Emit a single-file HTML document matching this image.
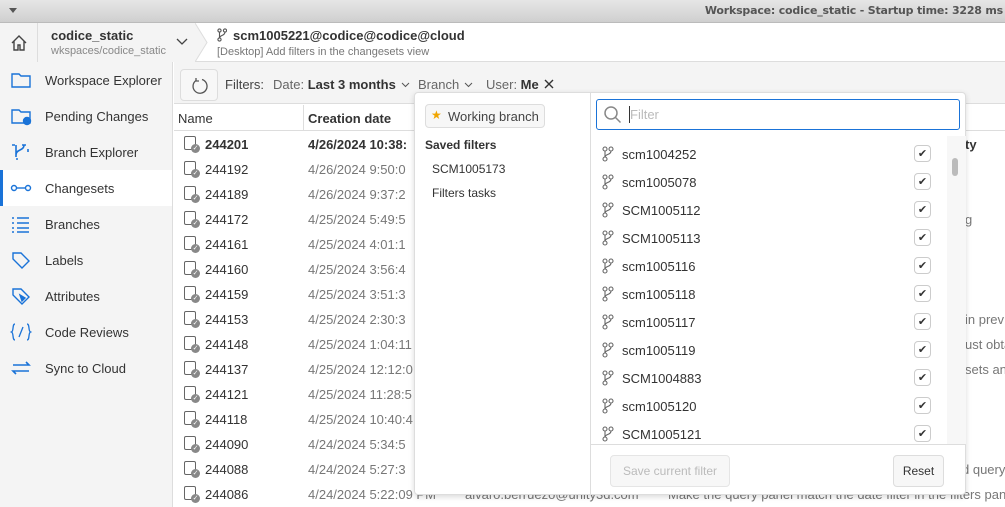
<!DOCTYPE html>
<html><head><meta charset="utf-8"><style>
*{box-sizing:border-box;margin:0;padding:0}
body{width:1005px;height:507px;overflow:hidden;font-family:"Liberation Sans",sans-serif;font-size:13px;color:#333;background:#fff;position:relative;white-space:nowrap}
.abs{position:absolute}
.title{left:0;top:0;width:1005px;height:23px;background:linear-gradient(#e6e6e6,#cfcfcf);border-bottom:1px solid #bbb}
.title .t{right:2px;top:4px;font-family:"DejaVu Sans",sans-serif;font-size:11px;font-weight:bold;color:#555;letter-spacing:-0.2px}
.hdr{left:0;top:23px;width:1005px;height:39px;background:#fff;border-bottom:1px solid #ddd}
.side{left:0;top:62px;width:173px;height:445px;background:#f4f4f4;border-right:1px solid #ddd}
.si{position:absolute;left:0;width:172px;height:36px;font-size:13px;color:#333}
.si span{position:absolute;left:45px;top:11px}
.si svg{position:absolute;left:10px;top:8px}
.sel{background:#fff;border-left:3px solid #1a73d8}
.tool{left:174px;top:62px;width:831px;height:42px;background:#f4f4f4;border-bottom:1px solid #ddd}
.row{position:absolute;left:174px;width:831px;height:25px}
.row .n{position:absolute;left:31px;top:6px}
.row .d{position:absolute;left:134px;top:6px;color:#777}
.row .ic{position:absolute;left:10px;top:5px;width:12px;height:14px;border:1.3px solid #666;border-radius:2px}
.row .ic:after{content:"✓";position:absolute;right:-5px;bottom:-4px;width:9px;height:9px;border-radius:50%;background:#888;color:#fff;font-size:7px;line-height:9px;text-align:center}
.pop{left:414px;top:92px;width:552px;height:403px;background:#fff;border:1px solid #ddd;box-shadow:0 2px 6px rgba(0,0,0,.15);border-radius:4px}
.li{position:absolute;left:0;width:340px;height:28px}
.li span{position:absolute;left:31px;top:7px;font-size:13px}
.li svg{position:absolute;left:11px;top:6px}
.cb{position:absolute;left:323px;top:5px;width:17px;height:17px;border:1px solid #ccc;border-radius:4px;text-align:center;font-size:11px;line-height:16px;color:#333}
</style></head><body>
<div class="abs title"><div class="abs" style="left:9px;top:8px;width:0;height:0;border-left:4px solid transparent;border-right:4px solid transparent;border-top:5px solid #555"></div><div class="abs t">Workspace: codice_static - Startup time: 3228 ms</div></div>
<div class="abs hdr">
 <div class="abs" style="left:0;top:0;width:38px;height:39px;background:#f4f4f4;border-right:1px solid #ddd"><svg class="abs" style="left:10px;top:11px" width="18" height="18" viewBox="0 0 18 18" fill="none" stroke="#444" stroke-width="1.4"><path d="M2 9L9 2l7 7M4 7v9h4v-5h2v5h4V7"/></svg></div>
 <div class="abs" style="left:38px;top:0;width:157px;height:39px;background:#f4f4f4"></div>
 <svg class="abs" style="left:195px;top:0" width="14" height="39"><path d="M0 0L12 19.5 0 39Z" fill="#f4f4f4"/><path d="M0 0L12 19.5 0 39" stroke="#ddd" fill="none"/></svg>
 <div class="abs" style="left:51px;top:5px;font-weight:bold;font-size:13px">codice_static</div>
 <div class="abs" style="left:51px;top:22px;font-size:11px;color:#888">wkspaces/codice_static</div>
 <svg class="abs" style="left:176px;top:15px" width="12" height="8"><path d="M1 1l5 5 5-5" stroke="#444" fill="none" stroke-width="1.3"/></svg>
 <svg class="abs" style="left:217px;top:5px" width="10" height="14" fill="none" stroke="#555" stroke-width="1.1"><circle cx="2.5" cy="2.5" r="1.6"/><circle cx="2.5" cy="11.5" r="1.6"/><circle cx="8" cy="2.5" r="1.6"/><path d="M2.5 4v6M8 4c0 4-5.5 3-5.5 6"/></svg>
 <div class="abs" style="left:233px;top:5px;font-weight:bold;font-size:13px">scm1005221@codice@codice@cloud</div>
 <div class="abs" style="left:217px;top:23px;font-size:11px;color:#777">[Desktop] Add filters in the changesets view</div>
</div>
<div class="abs side">
 <div class="si" style="top:0"><svg width="22" height="20" fill="none" stroke="#1a73d8" stroke-width="1.4"><path d="M2 4h7l2 2h9v11H2z"/></svg><span>Workspace Explorer</span></div>
 <div class="si" style="top:36px"><svg width="22" height="20" fill="none" stroke="#1a73d8" stroke-width="1.4"><path d="M2 4h7l2 2h9v11H2z"/><circle cx="17" cy="15" r="3.5" fill="#1a73d8"/></svg><span>Pending Changes</span></div>
 <div class="si" style="top:72px"><svg width="22" height="20" fill="none" stroke="#1a73d8" stroke-width="1.6"><path d="M2 3h3M6 3v12M12 3h4M14 3c0 6-8 4-8 10M18 7v3M6 17h2"/></svg><span>Branch Explorer</span></div>
 <div class="si sel" style="top:108px"><svg width="22" height="20" style="left:7px" fill="none" stroke="#1a73d8" stroke-width="1.4"><circle cx="4" cy="10" r="2.5"/><circle cx="18" cy="10" r="2.5"/><path d="M6.5 10h9"/></svg><span style="left:42px">Changesets</span></div>
 <div class="si" style="top:144px"><svg width="22" height="20" fill="none" stroke="#1a73d8" stroke-width="1.6"><path d="M2 4h2M7 4h12M2 9h2M7 9h12M2 14h2M7 14h12M2 18h2M7 18h12"/></svg><span>Branches</span></div>
 <div class="si" style="top:180px"><svg width="22" height="20" fill="none" stroke="#1a73d8" stroke-width="1.4"><path d="M3 3h8l8 8-7 7-9-9z"/></svg><span>Labels</span></div>
 <div class="si" style="top:216px"><svg width="22" height="20" fill="none" stroke="#1a73d8" stroke-width="1.4"><path d="M3 3h8l8 8-7 7-9-9z"/><path d="M10 9l5 3-3 3z" fill="#1a73d8"/></svg><span>Attributes</span></div>
 <div class="si" style="top:252px"><svg width="22" height="20" fill="none" stroke="#1a73d8" stroke-width="1.3"><path d="M5 2C2 2 4 9 1.5 10 4 11 2 18 5 18M17 2c3 0 1 7 3.5 8-2.5 1-.5 8-3.5 8M13 5l-4 10"/></svg><span>Code Reviews</span></div>
 <div class="si" style="top:288px"><svg width="22" height="20" fill="none" stroke="#1a73d8" stroke-width="1.6"><path d="M3 7h16l-3-3M19 13H3l3 3"/></svg><span>Sync to Cloud</span></div>
</div>
<div class="abs tool">
 <div class="abs" style="left:6px;top:7px;width:38px;height:32px;border:1px solid #ddd;border-radius:4px;background:#f7f7f7"><svg class="abs" style="left:10px;top:7px" width="18" height="18" fill="none" stroke="#555" stroke-width="1.3"><path d="M11 2.5A7 7 0 1 1 5 3.5M5 1v3h3"/></svg></div>
 <div class="abs" style="left:51px;top:15px;color:#444">Filters:</div>
 <div class="abs" style="left:99px;top:15px;color:#666">Date: <b style="color:#333">Last 3 months</b></div>
 <svg class="abs" style="left:227px;top:20px" width="9" height="6"><path d="M1 1l3.5 3.5L8 1" stroke="#555" fill="none"/></svg>
 <div class="abs" style="left:244px;top:15px;color:#666">Branch</div>
 <svg class="abs" style="left:290px;top:20px" width="9" height="6"><path d="M1 1l3.5 3.5L8 1" stroke="#555" fill="none"/></svg>
 <div class="abs" style="left:312px;top:15px;color:#666">User: <b style="color:#333">Me</b></div>
 <svg class="abs" style="left:370px;top:17px" width="10" height="10"><path d="M1 1l8 8M9 1l-8 8" stroke="#333" stroke-width="1.4"/></svg>
</div>
<div class="abs" style="left:174px;top:105px;width:831px;height:26px;border-bottom:1px solid #ddd;background:#fff">
 <div class="abs" style="left:4px;top:6px">Name</div>
 <div class="abs" style="left:129px;top:0;width:1px;height:26px;background:#ddd"></div>
 <div class="abs" style="left:134px;top:6px;font-weight:bold">Creation date</div>
 <div class="abs" style="left:791px;top:32px;font-weight:bold">ty</div>
</div>
<div class="row" style="top:131px"><div class="ic"></div><div class="n" style="font-weight:bold">244201</div><div class="d" style="font-weight:bold;color:#333">4/26/2024 10:38:</div></div>
<div class="row" style="top:156px"><div class="ic"></div><div class="n">244192</div><div class="d">4/26/2024 9:50:0</div></div>
<div class="row" style="top:181px"><div class="ic"></div><div class="n">244189</div><div class="d">4/26/2024 9:37:2</div></div>
<div class="row" style="top:206px"><div class="ic"></div><div class="n">244172</div><div class="d">4/25/2024 5:49:5</div><div class="abs" style="left:791px;top:6px;color:#777">g</div></div>
<div class="row" style="top:231px"><div class="ic"></div><div class="n">244161</div><div class="d">4/25/2024 4:01:1</div></div>
<div class="row" style="top:256px"><div class="ic"></div><div class="n">244160</div><div class="d">4/25/2024 3:56:4</div></div>
<div class="row" style="top:281px"><div class="ic"></div><div class="n">244159</div><div class="d">4/25/2024 3:51:3</div></div>
<div class="row" style="top:306px"><div class="ic"></div><div class="n">244153</div><div class="d">4/25/2024 2:30:3</div><div class="abs" style="left:791px;top:6px;color:#777">in prev</div></div>
<div class="row" style="top:331px"><div class="ic"></div><div class="n">244148</div><div class="d">4/25/2024 1:04:11</div><div class="abs" style="left:791px;top:6px;color:#777">ust obta</div></div>
<div class="row" style="top:356px"><div class="ic"></div><div class="n">244137</div><div class="d">4/25/2024 12:12:0</div><div class="abs" style="left:791px;top:6px;color:#777">sets an</div></div>
<div class="row" style="top:381px"><div class="ic"></div><div class="n">244121</div><div class="d">4/25/2024 11:28:5</div></div>
<div class="row" style="top:406px"><div class="ic"></div><div class="n">244118</div><div class="d">4/25/2024 10:40:4</div></div>
<div class="row" style="top:431px"><div class="ic"></div><div class="n">244090</div><div class="d">4/24/2024 5:34:5</div></div>
<div class="row" style="top:456px"><div class="ic"></div><div class="n">244088</div><div class="d">4/24/2024 5:27:3</div><div class="abs" style="left:788px;top:6px;color:#777">d query</div></div>
<div class="row" style="top:481px"><div class="ic"></div><div class="n">244086</div><div class="d">4/24/2024 5:22:09 PM</div><div class="abs" style="left:291px;top:6px;color:#777">alvaro.berruezo@unity3d.com</div><div class="abs" style="left:494px;top:6px;color:#777">Make the query panel match the date filter in the filters pan</div></div>
<div class="abs pop">
 <div class="abs" style="left:10px;top:11px;width:120px;height:24px;border:1px solid #ddd;border-radius:4px;background:#f7f7f7"><span class="abs" style="left:5px;top:3px;color:#f0a500;font-size:12px">★</span><span class="abs" style="left:22px;top:4px;font-size:13px;color:#444">Working branch</span></div>
 <div class="abs" style="left:10px;top:45px;font-weight:bold;font-size:12px">Saved filters</div>
 <div class="abs" style="left:17px;top:69px;font-size:12px">SCM1005173</div>
 <div class="abs" style="left:17px;top:93px;font-size:12px">Filters tasks</div>
 <div class="abs" style="left:175px;top:0;width:1px;height:402px;background:#ddd"></div>
 <div class="abs" style="left:181px;top:6px;width:364px;height:31px;border:1.5px solid #1a73d8;border-radius:3px"><svg class="abs" style="left:6px;top:5px" width="20" height="20" fill="none" stroke="#888" stroke-width="1.5"><circle cx="8" cy="8" r="6"/><path d="M12.5 12.5l5 5"/></svg><div class="abs" style="left:32px;top:6px;width:1px;height:17px;background:#333"></div><span class="abs" style="left:33px;top:7px;color:#bbb">Filter</span></div>
 <div class="abs" style="left:176px;top:43px;width:375px;height:308px;overflow:hidden">
  <div class="abs" style="left:356px;top:0;width:19px;height:308px;background:#f7f7f7"><div class="abs" style="left:5px;top:22px;width:6px;height:18px;border-radius:3px;background:#bbb"></div></div>
  <div class="li" style="top:4px"><svg width="12" height="16" fill="none" stroke="#666" stroke-width="1.1"><circle cx="3" cy="3" r="2"/><circle cx="3" cy="13" r="2"/><circle cx="9" cy="3" r="2"/><path d="M3 5v6M9 5c0 4-6 3-6 6"/></svg><span>scm1004252</span><div class="cb">✔</div></div>
  <div class="li" style="top:32px"><svg width="12" height="16" fill="none" stroke="#666" stroke-width="1.1"><circle cx="3" cy="3" r="2"/><circle cx="3" cy="13" r="2"/><circle cx="9" cy="3" r="2"/><path d="M3 5v6M9 5c0 4-6 3-6 6"/></svg><span>scm1005078</span><div class="cb">✔</div></div>
  <div class="li" style="top:60px"><svg width="12" height="16" fill="none" stroke="#666" stroke-width="1.1"><circle cx="3" cy="3" r="2"/><circle cx="3" cy="13" r="2"/><circle cx="9" cy="3" r="2"/><path d="M3 5v6M9 5c0 4-6 3-6 6"/></svg><span>SCM1005112</span><div class="cb">✔</div></div>
  <div class="li" style="top:88px"><svg width="12" height="16" fill="none" stroke="#666" stroke-width="1.1"><circle cx="3" cy="3" r="2"/><circle cx="3" cy="13" r="2"/><circle cx="9" cy="3" r="2"/><path d="M3 5v6M9 5c0 4-6 3-6 6"/></svg><span>SCM1005113</span><div class="cb">✔</div></div>
  <div class="li" style="top:116px"><svg width="12" height="16" fill="none" stroke="#666" stroke-width="1.1"><circle cx="3" cy="3" r="2"/><circle cx="3" cy="13" r="2"/><circle cx="9" cy="3" r="2"/><path d="M3 5v6M9 5c0 4-6 3-6 6"/></svg><span>scm1005116</span><div class="cb">✔</div></div>
  <div class="li" style="top:144px"><svg width="12" height="16" fill="none" stroke="#666" stroke-width="1.1"><circle cx="3" cy="3" r="2"/><circle cx="3" cy="13" r="2"/><circle cx="9" cy="3" r="2"/><path d="M3 5v6M9 5c0 4-6 3-6 6"/></svg><span>scm1005118</span><div class="cb">✔</div></div>
  <div class="li" style="top:172px"><svg width="12" height="16" fill="none" stroke="#666" stroke-width="1.1"><circle cx="3" cy="3" r="2"/><circle cx="3" cy="13" r="2"/><circle cx="9" cy="3" r="2"/><path d="M3 5v6M9 5c0 4-6 3-6 6"/></svg><span>scm1005117</span><div class="cb">✔</div></div>
  <div class="li" style="top:200px"><svg width="12" height="16" fill="none" stroke="#666" stroke-width="1.1"><circle cx="3" cy="3" r="2"/><circle cx="3" cy="13" r="2"/><circle cx="9" cy="3" r="2"/><path d="M3 5v6M9 5c0 4-6 3-6 6"/></svg><span>scm1005119</span><div class="cb">✔</div></div>
  <div class="li" style="top:228px"><svg width="12" height="16" fill="none" stroke="#666" stroke-width="1.1"><circle cx="3" cy="3" r="2"/><circle cx="3" cy="13" r="2"/><circle cx="9" cy="3" r="2"/><path d="M3 5v6M9 5c0 4-6 3-6 6"/></svg><span>SCM1004883</span><div class="cb">✔</div></div>
  <div class="li" style="top:256px"><svg width="12" height="16" fill="none" stroke="#666" stroke-width="1.1"><circle cx="3" cy="3" r="2"/><circle cx="3" cy="13" r="2"/><circle cx="9" cy="3" r="2"/><path d="M3 5v6M9 5c0 4-6 3-6 6"/></svg><span>scm1005120</span><div class="cb">✔</div></div>
  <div class="li" style="top:284px"><svg width="12" height="16" fill="none" stroke="#666" stroke-width="1.1"><circle cx="3" cy="3" r="2"/><circle cx="3" cy="13" r="2"/><circle cx="9" cy="3" r="2"/><path d="M3 5v6M9 5c0 4-6 3-6 6"/></svg><span>SCM1005121</span><div class="cb">✔</div></div>
 </div>
 <div class="abs" style="left:176px;top:351px;width:375px;height:1px;background:#ddd"></div>
 <div class="abs" style="left:195px;top:362px;width:120px;height:32px;border:1px solid #e5e5e5;border-radius:4px;background:#f7f7f7;color:#bbb;font-size:12px;text-align:center;line-height:30px">Save current filter</div>
 <div class="abs" style="left:478px;top:362px;width:51px;height:32px;border:1px solid #ddd;border-radius:4px;background:#f7f7f7;color:#333;font-size:12px;text-align:center;line-height:30px">Reset</div>
</div>
</body></html>
